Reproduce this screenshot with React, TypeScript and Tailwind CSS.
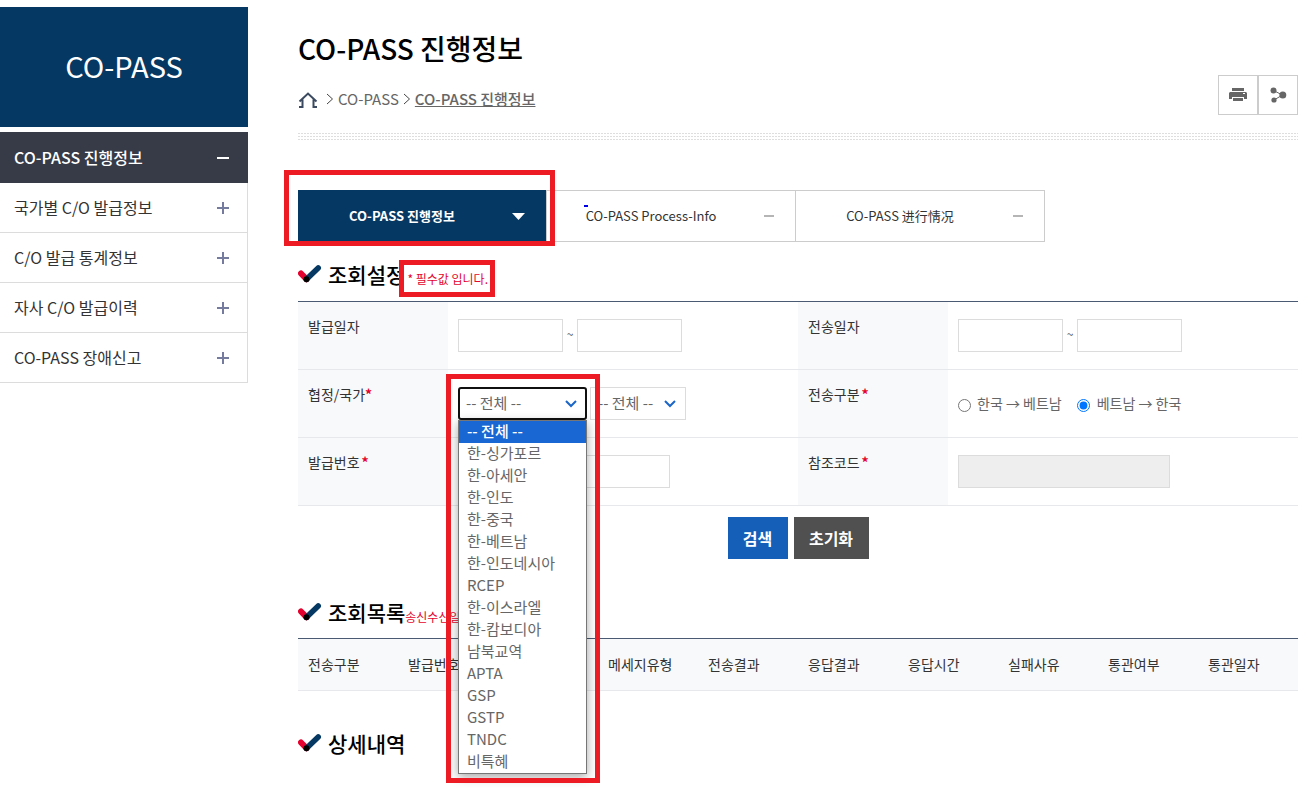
import React from "react";

const agreements = [
  "-- 전체 --",
  "한-싱가포르",
  "한-아세안",
  "한-인도",
  "한-중국",
  "한-베트남",
  "한-인도네시아",
  "RCEP",
  "한-이스라엘",
  "한-캄보디아",
  "남북교역",
  "APTA",
  "GSP",
  "GSTP",
  "TNDC",
  "비특혜",
];

const menuItems = ["국가별 C/O 발급정보", "C/O 발급 통계정보", "자사 C/O 발급이력", "CO-PASS 장애신고"];

const columns = [
  "전송구분",
  "발급번호",
  "",
  "메세지유형",
  "전송결과",
  "응답결과",
  "응답시간",
  "실패사유",
  "통관여부",
  "통관일자",
];

const field = "h-[33px] border border-[#dcdcdc] bg-white";

function CheckMark() {
  return (
    <svg width="24" height="18" viewBox="0 0 24 18" className="mr-[6px] shrink-0" aria-hidden="true">
      <path d="M3 8.5 8.5 14.2" stroke="#e4032e" strokeWidth="6" strokeLinecap="round" />
      <path d="M8.5 14.2 20.2 3" stroke="#053863" strokeWidth="5.6" strokeLinecap="round" />
      <circle cx="8.5" cy="14.3" r="3" fill="#000" />
    </svg>
  );
}

function Chevron() {
  return (
    <svg width="8" height="12" viewBox="0 0 8 12" fill="none" stroke="#444" aria-hidden="true">
      <path d="M1 1 6.5 6 1 11" />
    </svg>
  );
}

function SectionTitle({ children }: { children: React.ReactNode }) {
  return (
    <div className="flex h-[30px] items-center">
      <CheckMark />
      <h2 className="text-[21px] leading-[30px] font-medium text-black">{children}</h2>
    </div>
  );
}

function RequiredMark({ tight }: { tight?: boolean }) {
  return <span className={tight ? "font-bold text-[#e4032e]" : "ml-[2px] font-bold text-[#e4032e]"}>*</span>;
}

function FieldLabel({ htmlFor, mark, children }: { htmlFor: string; mark?: React.ReactNode; children: React.ReactNode }) {
  return (
    <div className="border-b border-[#e6e8eb] bg-[#f8f9fb] px-[10px] pt-[14px] text-sm leading-5 text-[#333]">
      <label htmlFor={htmlFor}>{children}</label>
      {mark}
    </div>
  );
}

function FieldCell({ children }: { children: React.ReactNode }) {
  return <div className="flex items-start border-b border-[#e6e8eb] px-[10px] pt-[17px]">{children}</div>;
}

function DateRange({ id, label }: { id: string; label: string }) {
  return (
    <>
      <input id={id} className={field + " w-[105px]"} />
      <span className="w-[14px] text-center text-xs leading-[30px] text-[#555]">~</span>
      <input aria-label={label + " 종료"} className={field + " w-[105px]"} />
    </>
  );
}

function SelectArrow() {
  return (
    <svg
      width="12"
      height="8"
      viewBox="0 0 12 8"
      fill="none"
      stroke="#1b66c9"
      strokeWidth="2"
      className="pointer-events-none absolute top-[13px] right-[10px]"
      aria-hidden="true"
    >
      <path d="M1 1 6 6 11 1" />
    </svg>
  );
}

export default function App() {
  return (
    <div className="flex min-h-screen items-start bg-white pt-[7px] pr-[10px] font-['Noto_Sans_CJK_KR','Noto_Sans_CJK_SC',sans-serif] text-[#333]">
      <aside className="w-[248px] shrink-0">
        <div className="flex h-[120px] items-center justify-center bg-[#053863] pb-[2px] text-[29px] text-white">CO-PASS</div>
        <nav className="mt-[5px] text-base">
          <a href="#status" className="flex h-[51px] items-center justify-between bg-[#373b47] pr-[18px] pl-[14px] font-medium text-white">
            <span className="pb-[2px]">CO-PASS 진행정보</span>
            <svg width="14" height="14" viewBox="0 0 14 14" stroke="#fff" strokeWidth="2" aria-hidden="true">
              <path d="M1 7h12" />
            </svg>
          </a>
          {menuItems.map((item) => (
            <a
              key={item}
              href="#menu"
              className="flex h-[50px] items-center justify-between border-r border-b border-[#dcdcdc] pr-[17px] pl-[14px]"
            >
              <span className="pb-[2px]">{item}</span>
              <svg width="14" height="14" viewBox="0 0 14 14" stroke="#747b9c" strokeWidth="2" aria-hidden="true">
                <path d="M1 7h12M7 1v12" />
              </svg>
            </a>
          ))}
        </nav>
      </aside>

      <main className="ml-[50px] min-w-0 flex-1">
        <header className="flex items-start justify-between">
          <div>
            <h1 className="mt-5 text-[28px] leading-[42px] font-medium text-black">CO-PASS 진행정보</h1>
            <nav className="mt-5 flex h-5 items-center text-[15px] text-[#666]" aria-label="경로">
              <a href="#home" aria-label="홈" className="mt-[2px] mr-2">
                <svg width="20" height="18" viewBox="0 0 20 18" fill="none" stroke="#3b4a60" strokeWidth="2" aria-hidden="true">
                  <path d="M1.5 10.5 10 2.5 18.500 10.500M4.500 8.500V16H1M15.500 8.500V16H19" />
                </svg>
              </a>
              <Chevron />
              <a href="#copass" className="mx-1">CO-PASS</a>
              <Chevron />
              <a href="#status" className="ml-1 font-medium underline">CO-PASS 진행정보</a>
            </nav>
          </div>
          <div className="mt-[68px] flex">
            <button type="button" aria-label="인쇄" className="flex h-10 w-10 items-center justify-center border border-[#ccc]">
              <svg width="18" height="14" viewBox="0 0 18 14" fill="#666" aria-hidden="true">
                <path d="M3 0h12v3H3zM1 4h16l1 1v6h-3V9H3v2H0V5zM4 10h10v3H4z" />
                <path d="M14 5h2v1h-2z" fill="#fff" />
              </svg>
            </button>
            <button type="button" aria-label="공유" className="flex h-10 w-10 items-center justify-center border border-[#ccc]">
              <svg width="17" height="16" viewBox="0 0 17 16" fill="#666" aria-hidden="true">
                <path d="M3.5 3.5 12.5 8 4 13" fill="none" stroke="#666" />
                <circle cx="3.5" cy="3.5" r="3" />
                <circle cx="12.8" cy="8" r="3.5" />
                <circle cx="4" cy="13" r="2.6" />
              </svg>
            </button>
          </div>
        </header>

        <div className="mt-[18px] flex flex-col gap-[2px]" aria-hidden="true">
          <div className="h-px bg-[repeating-linear-gradient(90deg,#dedede_0_2px,#fff_2px_3px)]" />
          <div className="h-px bg-[repeating-linear-gradient(90deg,#dedede_0_2px,#fff_2px_3px)]" />
          <div className="h-px bg-[repeating-linear-gradient(90deg,#dedede_0_2px,#fff_2px_3px)]" />
        </div>

        <div className="mt-[50px] flex h-[52px] text-[13px]" role="tablist">
          <div className="relative z-10 flex w-[248px]">
            <button type="button" role="tab" aria-selected="true" className="flex h-[52px] flex-1 items-center bg-[#053863] font-bold text-white">
              <span className="w-[208px]">CO-PASS 진행정보</span>
              <svg width="13" height="7" viewBox="0 0 13 7" fill="#fff" className="ml-[6px]" aria-hidden="true">
                <path d="M0 0h13L6.5 7z" />
              </svg>
            </button>
            <span className="pointer-events-none absolute -top-5 -left-[14px] h-[76px] w-[271px] border-[5px] border-[#ed1c24]" />
          </div>
          <button type="button" role="tab" aria-selected="false" className="relative flex w-[249px] items-center border-y border-l border-[#ccc]">
            <span className="w-[208px]">CO-PASS Process-Info</span>
            <span className="ml-[9px] h-[2px] w-[10px] bg-[#b5b5b5]" />
            <span className="absolute top-[14px] left-[37px] h-[2px] w-1 bg-[#0000e8]" />
          </button>
          <button type="button" role="tab" aria-selected="false" className="flex w-[250px] items-center border border-[#ccc]">
            <span className="w-[208px]">CO-PASS 进行情况</span>
            <span className="ml-[9px] h-[2px] w-[10px] bg-[#b5b5b5]" />
          </button>
        </div>

        <section>
          <div className="relative mt-[17px]">
            <SectionTitle>조회설정</SectionTitle>
            <p className="absolute top-px left-[101px] flex h-[37px] w-24 items-center justify-end border-[5px] border-[#ed1c24] bg-white pr-[2px] text-xs whitespace-nowrap text-[#e4032e]">
              * 필수값 입니다.
            </p>
          </div>
          <form onSubmit={(e) => e.preventDefault()}>
            <div className="mt-3 grid grid-cols-[150px_minmax(0,1fr)_150px_minmax(0,1fr)] auto-rows-[68px] border-t border-[#4a5a73]">
              <FieldLabel htmlFor="issueFrom">발급일자</FieldLabel>
              <FieldCell><DateRange id="issueFrom" label="발급일자" /></FieldCell>
              <FieldLabel htmlFor="sendFrom">전송일자</FieldLabel>
              <FieldCell><DateRange id="sendFrom" label="전송일자" /></FieldCell>

              <FieldLabel htmlFor="agreement" mark={<RequiredMark tight />}>협정/국가</FieldLabel>
              <FieldCell>
                <div className="relative z-20">
                  <select
                    id="agreement"
                    defaultValue="-- 전체 --"
                    className="block h-[33px] w-[129px] appearance-none rounded-[3px] border-2 border-[#101010] bg-white pl-[6px] text-[15px] text-[#666] outline-none"
                  >
                    {agreements.map((a) => <option key={a}>{a}</option>)}
                  </select>
                  <SelectArrow />
                  <ul
                    role="listbox"
                    aria-label="협정 목록"
                    className="absolute top-[33px] left-0 w-[129px] border border-[#767676] bg-white text-[15px] leading-5 text-[#666] shadow-[0_3px_10px_rgba(0,0,0,0.35)]"
                  >
                    {agreements.map((a, i) => (
                      <li
                        key={a}
                        role="option"
                        aria-selected={i === 0}
                        className={i === 0 ? "h-[22px] bg-[#1967d2] pl-2 font-medium text-white" : "h-[22px] pl-2"}
                      >
                        {a}
                      </li>
                    ))}
                  </ul>
                  <span className="pointer-events-none absolute -top-[13px] -left-3 h-[409px] w-[154px] border-[5px] border-[#ed1c24]" />
                </div>
                <div className="relative ml-[3px]">
                  <select
                    aria-label="국가"
                    className="block h-[33px] w-24 appearance-none border border-[#dcdcdc] bg-white pl-[7px] text-[15px] text-[#666]"
                  >
                    <option>-- 전체 --</option>
                  </select>
                  <SelectArrow />
                </div>
              </FieldCell>
              <FieldLabel htmlFor="toVietnam" mark={<RequiredMark />}>전송구분</FieldLabel>
              <FieldCell>
                <div className="flex h-[33px] items-center text-sm text-[#666]">
                  <input id="toVietnam" type="radio" name="direction" className="mt-[3px] mr-[6px] h-[13px] w-[13px]" />
                  <label htmlFor="toVietnam" className="pb-[2px]">한국 → 베트남</label>
                  <input id="toKorea" type="radio" name="direction" defaultChecked className="mt-[3px] mr-[7px] ml-[15px] h-[13px] w-[13px]" />
                  <label htmlFor="toKorea" className="pb-[2px]">베트남 → 한국</label>
                </div>
              </FieldCell>

              <FieldLabel htmlFor="issueNo" mark={<RequiredMark />}>발급번호</FieldLabel>
              <FieldCell><input id="issueNo" className={field + " w-[212px]"} /></FieldCell>
              <FieldLabel htmlFor="refCode" mark={<RequiredMark />}>참조코드</FieldLabel>
              <FieldCell>
                <input id="refCode" disabled className="h-[33px] w-[212px] border border-[#dcdcdc] bg-[#eee]" />
              </FieldCell>
            </div>
            <div className="mt-[11px] flex justify-center gap-[6px] text-base font-bold text-white">
              <button type="submit" className="h-[42px] w-[60px] bg-[#155fb9]">검색</button>
              <button type="reset" className="h-[42px] w-[75px] bg-[#505050]">초기화</button>
            </div>
          </form>
        </section>

        <section className="mt-[38px]">
          <div className="flex items-end">
            <SectionTitle>조회목록</SectionTitle>
            <span className="text-xs leading-5 text-[#e4032e]">송신수신일</span>
          </div>
          <table className="mt-[11px] w-full table-fixed border-t border-b border-t-[#4a5a73] border-b-[#e6e8eb] bg-[#f8f9fb] text-sm">
            <thead>
              <tr className="h-[52px]">
                {columns.map((c, i) => (
                  <th key={i} scope="col" className="px-[10px] pb-[2px] text-left font-normal whitespace-nowrap">{c}</th>
                ))}
              </tr>
            </thead>
          </table>
        </section>

        <section className="mt-[37px]">
          <SectionTitle>상세내역</SectionTitle>
        </section>
      </main>
    </div>
  );
}
